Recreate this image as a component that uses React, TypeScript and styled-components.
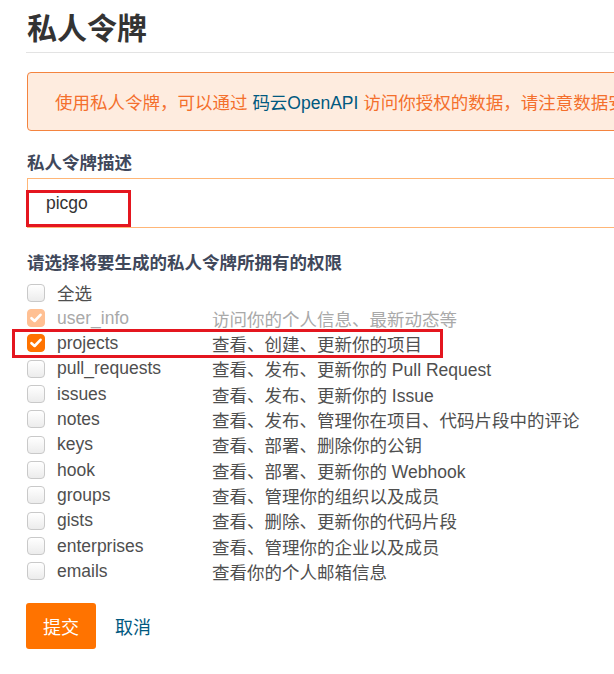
import React from "react";
import styled, { createGlobalStyle } from "styled-components";

const GlobalStyle = createGlobalStyle`
  html, body {
    margin: 0;
    padding: 0;
    background: #ffffff;
    overflow: hidden;
  }
  body {
    font-family: "Liberation Sans", "Noto Sans CJK SC", sans-serif;
  }
`;

const Page = styled.div`
  width: 820px;
  padding: 10px 0 40px 26px;
  box-sizing: border-box;
`;

const Heading = styled.h1`
  margin: 0;
  font-size: 30px;
  line-height: 38px;
  font-weight: bold;
  color: #333333;
  padding: 0 0 4px 1px;
  border-bottom: 1px solid #e3e3e3;
`;

const Notice = styled.div`
  margin-top: 19px;
  margin-left: 1px;
  height: 59px;
  box-sizing: border-box;
  display: flex;
  align-items: center;
  padding: 0 27px;
  border: 1px solid #f4843f;
  border-radius: 4px;
  background: #feecdf;
  color: #f46f2c;
  font-size: 17.5px;
  white-space: pre;
  overflow: hidden;
`;

const NoticeLink = styled.a`
  color: #005980;
  text-decoration: none;
`;

const FieldLabel = styled.div<{ $gap: number }>`
  margin-top: ${(p) => p.$gap}px;
  padding-left: 1px;
  font-size: 17.5px;
  line-height: 20px;
  font-weight: bold;
  color: #40485b;
`;

const InputWrap = styled.div`
  position: relative;
  margin-top: 5px;
  margin-left: 1px;
`;

const TextInput = styled.div`
  height: 50px;
  box-sizing: border-box;
  border: 1px solid #ffb677;
  border-right: none;
  display: flex;
  align-items: center;
  padding-left: 18px;
  font-size: 17.5px;
  color: #333333;
`;

const Highlight = styled.div<{ $left: number; $top: number; $w: number; $h: number }>`
  position: absolute;
  left: ${(p) => p.$left}px;
  top: ${(p) => p.$top}px;
  width: ${(p) => p.$w}px;
  height: ${(p) => p.$h}px;
  box-sizing: border-box;
  border: 3px solid #e4161f;
  pointer-events: none;
`;

const ScopeList = styled.div`
  margin-top: 7px;
  display: flex;
  flex-direction: column;
`;

const ScopeRow = styled.div<{ $muted?: boolean }>`
  position: relative;
  height: 25.35px;
  display: grid;
  grid-template-columns: 18px 143px 1fr;
  column-gap: 12px;
  align-items: center;
  padding-left: 1px;
  font-size: 17.5px;
  color: ${(p) => (p.$muted ? "#a9a9a9" : "#4f4f4f")};
  white-space: nowrap;
`;

const Box = styled.span<{ $checked?: boolean; $disabled?: boolean }>`
  width: 18px;
  height: 18px;
  box-sizing: border-box;
  border-radius: 4px;
  display: flex;
  align-items: center;
  justify-content: center;
  border: 1px solid
    ${(p) => (p.$checked ? (p.$disabled ? "#ffc093" : "#ff7300") : "#c9c9c9")};
  background: ${(p) =>
    p.$checked
      ? p.$disabled
        ? "#ffc093"
        : "#ff7300"
      : "linear-gradient(#ffffff, #ececec)"};
`;

const Actions = styled.div`
  margin-top: 19px;
  display: flex;
  align-items: center;
  gap: 19px;
`;

const SubmitButton = styled.button`
  width: 70px;
  height: 46px;
  border: none;
  border-radius: 3px;
  background: #ff7300;
  color: #ffffff;
  font-family: inherit;
  font-size: 18px;
  cursor: pointer;
`;

const CancelLink = styled.a`
  color: #005980;
  font-size: 18px;
  text-decoration: none;
`;

type Scope = {
  name: string;
  desc: string;
  checked?: boolean;
  disabled?: boolean;
  marked?: boolean;
};

const scopes: Scope[] = [
  { name: "全选", desc: "" },
  { name: "user_info", desc: "访问你的个人信息、最新动态等", checked: true, disabled: true },
  { name: "projects", desc: "查看、创建、更新你的项目", checked: true, marked: true },
  { name: "pull_requests", desc: "查看、发布、更新你的 Pull Request" },
  { name: "issues", desc: "查看、发布、更新你的 Issue" },
  { name: "notes", desc: "查看、发布、管理你在项目、代码片段中的评论" },
  { name: "keys", desc: "查看、部署、删除你的公钥" },
  { name: "hook", desc: "查看、部署、更新你的 Webhook" },
  { name: "groups", desc: "查看、管理你的组织以及成员" },
  { name: "gists", desc: "查看、删除、更新你的代码片段" },
  { name: "enterprises", desc: "查看、管理你的企业以及成员" },
  { name: "emails", desc: "查看你的个人邮箱信息" },
];

const Check = () => (
  <svg width="12" height="10" viewBox="0 0 12 10">
    <polyline
      points="1.5,5.2 4.6,8 10.5,1.8"
      fill="none"
      stroke="#ffffff"
      strokeWidth="2.6"
      strokeLinecap="round"
      strokeLinejoin="round"
    />
  </svg>
);

const App: React.FC = () => {
  return (
    <Page>
      <GlobalStyle />
      <Heading>私人令牌</Heading>
      <Notice>
        {"使用私人令牌，可以通过 "}
        <NoticeLink>码云OpenAPI</NoticeLink>
        {" 访问你授权的数据，请注意数据安全"}
      </Notice>

      <FieldLabel $gap={22}>私人令牌描述</FieldLabel>
      <InputWrap>
        <TextInput>picgo</TextInput>
        <Highlight $left={-1} $top={12} $w={105} $h={37} />
      </InputWrap>

      <FieldLabel $gap={25}>请选择将要生成的私人令牌所拥有的权限</FieldLabel>
      <ScopeList>
        {scopes.map((s) => (
          <ScopeRow key={s.name} $muted={s.disabled}>
            <Box $checked={s.checked} $disabled={s.disabled}>
              {s.checked && <Check />}
            </Box>
            <span>{s.name}</span>
            <span>{s.desc}</span>
            {s.marked && <Highlight $left={-14} $top={-2} $w={431} $h={29} />}
          </ScopeRow>
        ))}
      </ScopeList>

      <Actions>
        <SubmitButton>提交</SubmitButton>
        <CancelLink>取消</CancelLink>
      </Actions>
    </Page>
  );
};

export default App;
